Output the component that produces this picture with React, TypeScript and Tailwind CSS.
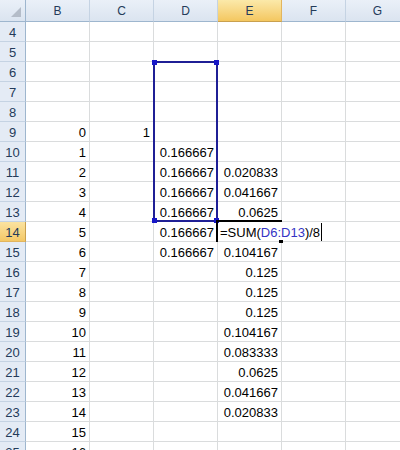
const cols = ["B", "C", "D", "E", "F", "G"];
const rows = Array.from({ length: 22 }, (_, i) => i + 4);

const eValues: Record<number, string> = {
  11: "0.020833",
  12: "0.041667",
  13: "0.0625",
  15: "0.104167",
  16: "0.125",
  17: "0.125",
  18: "0.125",
  19: "0.104167",
  20: "0.083333",
  21: "0.0625",
  22: "0.041667",
  23: "0.020833",
};

function cellValue(col: string, row: number): string {
  if (col === "B" && row >= 9) return String(row - 9);
  if (col === "C" && row === 9) return "1";
  if (col === "D" && row >= 10 && row <= 15) return "0.166667";
  if (col === "E") return eValues[row] ?? "";
  return "";
}

function ColHeader({ label }: { label: string }) {
  const active = label === "E";
  return (
    <div
      className={
        active
          ? "h-[22px] flex items-center justify-center border-r border-b border-r-[#e2b55e] border-b-[#c9a04e] bg-gradient-to-b from-[#fbe9a9] to-[#f4c75f] text-[12px] text-[#243b5a]"
          : "h-[22px] flex items-center justify-center border-r border-b border-r-[#c5d3e3] border-b-[#9eb6ce] bg-gradient-to-b from-[#eaf0f8] to-[#dbe4f0] text-[12px] text-[#243b5a]"
      }
    >
      {label}
    </div>
  );
}

function RowHeader({ row }: { row: number }) {
  const active = row === 14;
  return (
    <div
      className={
        active
          ? "h-[20px] flex justify-center border-r border-b border-r-[#c9a04e] border-b-[#e2b55e] bg-gradient-to-b from-[#fbe3a0] to-[#f4c865] text-[13px] leading-[22px] text-[#243b5a]"
          : "h-[20px] flex justify-center border-r border-b border-r-[#9eb6ce] border-b-[#c5d3e3] bg-[#e4ebf5] text-[13px] leading-[22px] text-[#243b5a]"
      }
    >
      {row}
    </div>
  );
}

// cell E14 in edit mode, text spills into F14
function EditCell() {
  return (
    <div className="relative z-10 h-[20px] border-r border-b border-[#dadcdd]">
      <div className="absolute -left-[2px] -top-[2px] w-[66px] h-[22px] border-t-2 border-l-2 border-black" />
      <div className="absolute left-[1px] top-0 w-[108px] h-[19px] bg-white flex items-start">
        <span className="pl-[1px] text-[13px] leading-[22px] text-black whitespace-nowrap">
          =SUM(<span className="text-[#3434c4]">D6:D13</span>)/8
        </span>
        <span className="ml-[1px] mt-[1px] w-px h-[18px] bg-black" />
      </div>
      <div className="absolute -right-[2px] -bottom-[2px] w-[4px] h-[3px] bg-black" />
    </div>
  );
}

export default function App() {
  return (
    <div
      className="relative w-[400px] h-[450px] overflow-hidden bg-white"
      style={{ fontFamily: '"Liberation Sans", Arial, sans-serif' }}
    >
      <div className="grid grid-cols-[26px_repeat(6,64px)] w-[410px]">
        {/* corner */}
        <div className="flex items-end justify-end pr-[3px] pb-[3px] h-[22px] border-r border-b border-r-[#9eb6ce] border-b-[#9eb6ce] bg-gradient-to-b from-[#eaf0f8] to-[#dbe4f0]">
          <svg width="11" height="11" viewBox="0 0 11 11">
            <polygon points="10,0 10,10 0,10" fill="#b4bcc8" />
          </svg>
        </div>
        {cols.map((c) => (
          <ColHeader key={c} label={c} />
        ))}

        {rows.map((r) => (
          <div key={r} className="contents">
            <RowHeader row={r} />
            {cols.map((c) =>
              c === "E" && r === 14 ? (
                <EditCell key={c + r} />
              ) : (
                <div
                  key={c + r}
                  className="h-[20px] border-r border-b border-[#dadcdd] text-right pr-[3px] text-[13px] leading-[22px] text-black whitespace-nowrap overflow-hidden"
                >
                  {cellValue(c, r)}
                </div>
              )
            )}
          </div>
        ))}
      </div>

      <div className="absolute left-[153px] top-[61px] w-[65px] h-[161px] border-2 border-[#1f1f95]">
        <div className="absolute -left-[3px] -top-[3px] w-[5px] h-[5px] bg-[#1717c8]" />
        <div className="absolute -right-[3px] -top-[3px] w-[5px] h-[5px] bg-[#1717c8]" />
        <div className="absolute -left-[3px] -bottom-[3px] w-[5px] h-[5px] bg-[#1717c8]" />
        <div className="absolute -right-[3px] -bottom-[3px] w-[5px] h-[5px] bg-[#1717c8]" />
      </div>
    </div>
  );
}
